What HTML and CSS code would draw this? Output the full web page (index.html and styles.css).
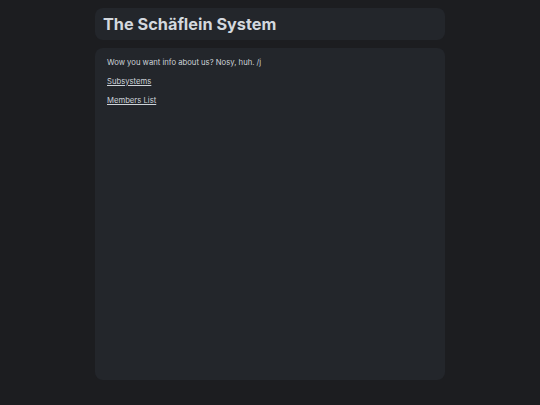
FILE: index.html
```html
<!DOCTYPE html>
<html lang="en">
<head>
<meta charset="utf-8">
<title>The Schäflein System</title>
<link rel="stylesheet" href="styles.css">
</head>
<body>
<div class="page">
  <header class="card header">
    <h1 class="title">The Schäflein System</h1>
  </header>
  <main class="card content">
    <p>Wow you want info about us? Nosy, huh. /j</p>
    <p><a href="#">Subsystems</a></p>
    <p><a href="#">Members List</a></p>
  </main>
</div>
</body>
</html>
```

FILE: styles.css
```css
html, body {
  margin: 0;
  padding: 0;
  background: #1c1d20;
  height: 100%;
}
body {
  font-family: "Inter", "Liberation Sans", sans-serif;
  color: #cdd3d9;
}
.page {
  width: 350px;
  margin: 0 auto;
  padding-top: 8px;
  display: flex;
  flex-direction: column;
  gap: 8px;
}
.card {
  background: #23262b;
  border-radius: 8px;
}
.header {
  height: 32px;
  padding: 0 8px;
  display: flex;
  align-items: center;
  box-sizing: border-box;
}
.title {
  margin: 0;
  font-size: 16.3px;
  font-weight: 700;
  color: #d3d8de;
}
.content {
  height: 332px;
  box-sizing: border-box;
  padding: 9px 12px;
  font-size: 7.7px;
  line-height: 11px;
}
.content p {
  margin: 0 0 8px 0;
}
.content a {
  color: #cdd3d9;
  text-decoration: underline;
}
```
